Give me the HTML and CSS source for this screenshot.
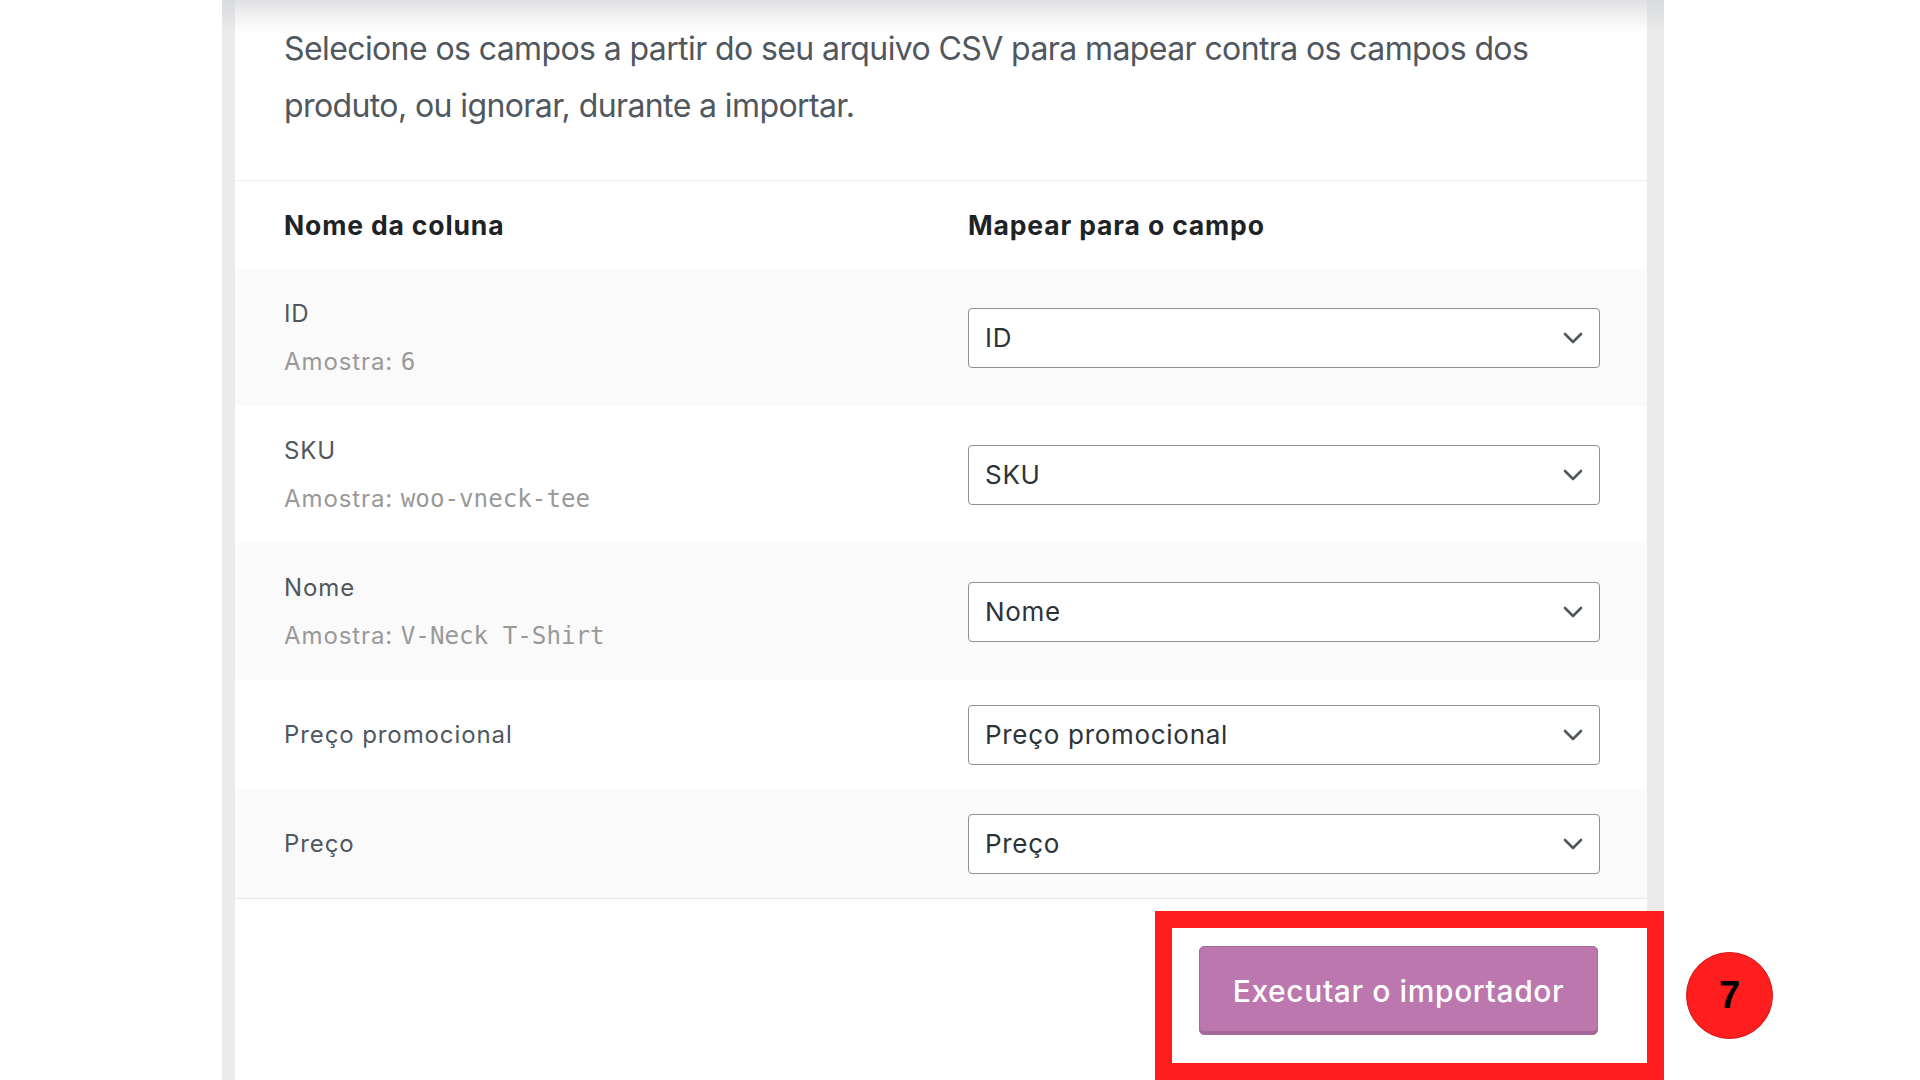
FILE: index.html
```html
<!DOCTYPE html>
<html lang="pt-BR">
<head>
<meta charset="utf-8">
<title>Mapear campos CSV</title>
<link rel="stylesheet" href="styles.css">
</head>
<body>
<div class="viewport">
  <div class="frame">
    <div class="card">
      <p class="intro">Selecione os campos a partir do seu arquivo CSV para mapear contra os campos dos produto, ou ignorar, durante a importar.</p>
      <div class="mapping">
        <div class="thead">
          <div class="col-name">Nome da coluna</div>
          <div class="col-map">Mapear para o campo</div>
        </div>
        <div class="row alt">
          <div class="col-name">
            <div class="label">ID</div>
            <div class="sample">Amostra: <code>6</code></div>
          </div>
          <div class="col-map">
            <div class="select"><span>ID</span><svg class="chev" width="20" height="12" viewBox="0 0 20 12"><path d="M2 2 L10 10 L18 2" fill="none" stroke="#50575e" stroke-width="2.6" stroke-linecap="round" stroke-linejoin="round"/></svg></div>
          </div>
        </div>
        <div class="row">
          <div class="col-name">
            <div class="label">SKU</div>
            <div class="sample">Amostra: <code>woo-vneck-tee</code></div>
          </div>
          <div class="col-map">
            <div class="select"><span>SKU</span><svg class="chev" width="20" height="12" viewBox="0 0 20 12"><path d="M2 2 L10 10 L18 2" fill="none" stroke="#50575e" stroke-width="2.6" stroke-linecap="round" stroke-linejoin="round"/></svg></div>
          </div>
        </div>
        <div class="row alt">
          <div class="col-name">
            <div class="label">Nome</div>
            <div class="sample">Amostra: <code>V-Neck T-Shirt</code></div>
          </div>
          <div class="col-map">
            <div class="select"><span>Nome</span><svg class="chev" width="20" height="12" viewBox="0 0 20 12"><path d="M2 2 L10 10 L18 2" fill="none" stroke="#50575e" stroke-width="2.6" stroke-linecap="round" stroke-linejoin="round"/></svg></div>
          </div>
        </div>
        <div class="row">
          <div class="col-name">
            <div class="label">Preço promocional</div>
          </div>
          <div class="col-map">
            <div class="select"><span>Preço promocional</span><svg class="chev" width="20" height="12" viewBox="0 0 20 12"><path d="M2 2 L10 10 L18 2" fill="none" stroke="#50575e" stroke-width="2.6" stroke-linecap="round" stroke-linejoin="round"/></svg></div>
          </div>
        </div>
        <div class="row alt">
          <div class="col-name">
            <div class="label">Preço</div>
          </div>
          <div class="col-map">
            <div class="select"><span>Preço</span><svg class="chev" width="20" height="12" viewBox="0 0 20 12"><path d="M2 2 L10 10 L18 2" fill="none" stroke="#50575e" stroke-width="2.6" stroke-linecap="round" stroke-linejoin="round"/></svg></div>
          </div>
        </div>
      </div>
      <div class="footer">
        <button class="btn" type="button">Executar o importador</button>
      </div>
    </div>
  </div>
  <div class="highlight"></div>
  <div class="step">7</div>
</div>
</body>
</html>
```

FILE: styles.css
```css
* { box-sizing: border-box; }
html, body { margin: 0; padding: 0; background: #fff; }
body { font-family: Inter, "Liberation Sans", Arial, sans-serif; }

.viewport {
  position: relative;
  width: 1920px;
  height: 1080px;
  overflow: hidden;
  background: #fff;
}

.frame {
  margin-left: 222px;
  width: 1442px;
  height: 1080px;
  padding: 0 17px 0 13px;
  background: linear-gradient(to bottom, #d9dadc 0, #ebebeb 34px, #ebebeb 100%);
}

.card {
  height: 100%;
  background: linear-gradient(to bottom, #dfe0e2 0, #f3f3f4 18px, #fff 34px, #fff 100%);
}

.intro {
  margin: 0;
  padding: 20px 47px 46px 49px;
  font-size: 32px;
  letter-spacing: -0.6px;
  line-height: 57px;
  color: #50575e;
  border-bottom: 1px solid #ececec;
}

.thead, .row {
  display: flex;
  align-items: center;
  padding: 0 47px 0 49px;
}

.thead {
  height: 88px;
  font-weight: 700;
  font-size: 26.5px;
  letter-spacing: 0.85px;
  color: #1d2327;
}

.col-name { flex: 0 0 684px; }
.col-map { flex: 1 1 auto; }

.row { padding-top: 24.5px; padding-bottom: 24.5px; background: #fff; }
.row.alt { background: #fafafa; }

.label {
  font-size: 24px;
  letter-spacing: 0.9px;
  line-height: 40px;
  color: #50575e;
}

.sample {
  margin-top: 8px;
  font-size: 24px;
  letter-spacing: 0.9px;
  line-height: 40px;
  color: #999;
}
.sample code {
  font-family: "DejaVu Sans Mono", "Liberation Mono", monospace;
  font-size: 24.2px;
  letter-spacing: 0;
  line-height: 1;
  color: #999;
}

.select {
  display: flex;
  align-items: center;
  justify-content: space-between;
  height: 60px;
  padding: 0 16px 0 16px;
  border: 1.5px solid #8c8f94;
  border-radius: 4px;
  background: #fff;
  font-size: 26px;
  letter-spacing: 0.7px;
  color: #2c3338;
}
.chev { display: block; }

.footer {
  border-top: 1px solid #e6e6e6;
  padding: 47px 49px 0 0;
  text-align: right;
}

.btn {
  width: 399px;
  height: 89px;
  border: 1px solid #a8689b;
  border-radius: 5px;
  background: #bb77ae;
  box-shadow: inset 0 -3px 0 #a3689a;
  color: #fff;
  font-family: Inter, "Liberation Sans", Arial, sans-serif;
  font-size: 30px;
  font-weight: 500;
  letter-spacing: 0.6px;
  cursor: pointer;
}

.highlight {
  position: absolute;
  left: 1155px;
  top: 911px;
  width: 509px;
  height: 169px;
  border: 17px solid #ff1c1c;
}

.step {
  position: absolute;
  left: 1686px;
  top: 952px;
  width: 87px;
  height: 87px;
  border-radius: 50%;
  background: #ff1e1e;
  border: 1px solid #d41212;
  display: flex;
  align-items: center;
  justify-content: center;
  font-family: "Liberation Sans", Arial, sans-serif;
  font-weight: 700;
  font-size: 38px;
  color: #000;
}
```
